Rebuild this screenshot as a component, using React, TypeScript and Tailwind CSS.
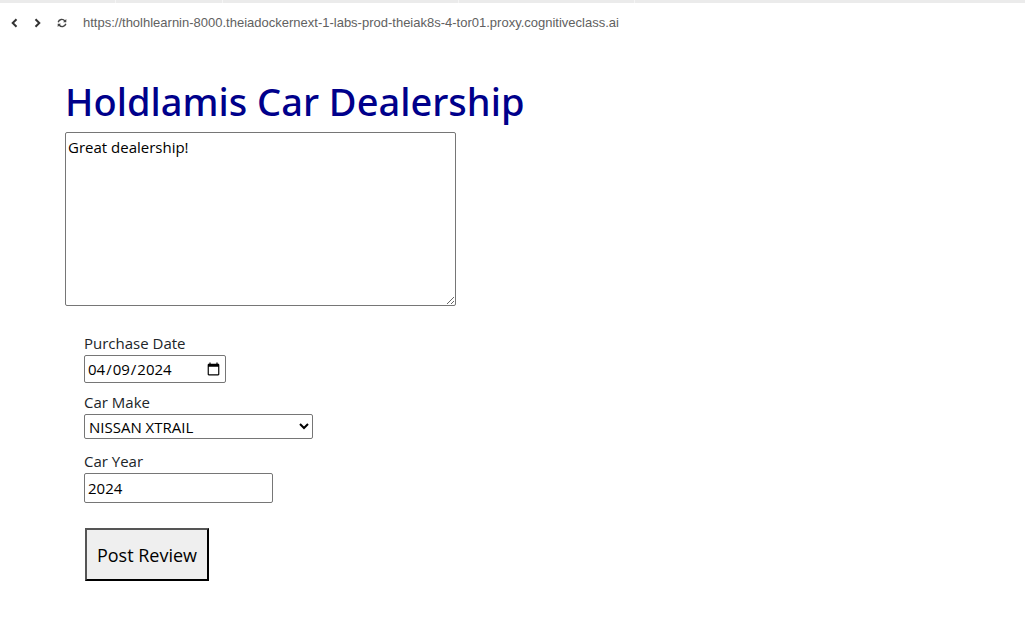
import { useState } from "react";

const segments = ["w-[116px]", "w-[107px]", "w-[236px]", "w-[176px]"];

const labelClass = "block text-[15px] leading-6 text-[#212529]";
const fieldClass =
  "block rounded-xs border border-[#767676] bg-white text-[15px] text-black";

function TabEdge() {
  return (
    <div className="flex h-[3px] bg-[#ebebeb]">
      {segments.map((width) => (
        <span key={width} className={`${width} border-r border-[#f5f5f5]`} />
      ))}
    </div>
  );
}

function AddressBar() {
  return (
    <nav className="flex h-10 items-center pl-2 font-['Liberation_Sans',sans-serif]">
      <button type="button" aria-label="Back" className="flex size-3 items-center justify-center">
        <svg width="12" height="12" viewBox="0 0 12 12" fill="none" stroke="#333" strokeWidth="2">
          <path d="M8.5 2.2 4.7 6l3.8 3.8" />
        </svg>
      </button>
      <button type="button" aria-label="Forward" className="ml-3 flex size-3 items-center justify-center">
        <svg width="12" height="12" viewBox="0 0 12 12" fill="none" stroke="#333" strokeWidth="2">
          <path d="M3.5 2.2 7.3 6 3.5 9.8" />
        </svg>
      </button>
      <button type="button" aria-label="Reload" className="ml-3 flex size-3 items-center justify-center">
        <svg width="12" height="12" viewBox="0 0 12 12" fill="none" stroke="#444" strokeWidth="1.4">
          <path d="M2.2 5.2A3.7 3.7 0 0 1 8.8 4M9.8 6.8A3.7 3.7 0 0 1 3.2 8" />
          <path d="M10.3 2v3.3H7zM1.7 10V6.7H5z" fill="#444" stroke="none" />
        </svg>
      </button>
      <input
        aria-label="Address"
        defaultValue="https://tholhlearnin-8000.theiadockernext-1-labs-prod-theiak8s-4-tor01.proxy.cognitiveclass.ai"
        className="ml-[15px] min-w-0 flex-1 bg-transparent text-[13px] leading-5 text-[#616161] outline-none"
      />
    </nav>
  );
}

export default function App() {
  const [review, setReview] = useState("Great dealership!");
  const [date, setDate] = useState("2024-04-09");
  const [year, setYear] = useState("2024");

  return (
    <div className="min-h-screen bg-white font-['Open_Sans','Noto_Sans',sans-serif]">
      <TabEdge />
      <AddressBar />
      <main className="px-[65px] pt-8">
        <h1 className="font-['Noto_Sans',sans-serif] text-[38px] leading-[53px] font-medium text-[#00008b]">
          Holdlamis Car Dealership
        </h1>
        <form onSubmit={(event) => event.preventDefault()}>
          <textarea
            id="review"
            aria-label="Review"
            cols={50}
            rows={7}
            value={review}
            onChange={(event) => setReview(event.target.value)}
            className="mt-1 block h-[174px] w-[391px] rounded-xs border border-[#767676] px-0.5 py-0.5 text-[15px] leading-6 text-black"
          />
          <div className="flex flex-col items-start gap-[7px] pt-[25px] pl-[19px]">
            <div>
              <label htmlFor="date" className={labelClass}>Purchase Date</label>
              <input
                id="date"
                type="date"
                value={date}
                onChange={(event) => setDate(event.target.value)}
                className={`${fieldClass} h-7 w-[142px] px-0.5`}
              />
            </div>
            <div>
              <label htmlFor="make" className={labelClass}>Car Make</label>
              <select id="make" className={`${fieldClass} h-[25px] w-[229px]`}>
                <option>NISSAN XTRAIL</option>
              </select>
            </div>
            <div className="pt-[3px]">
              <label htmlFor="year" className={labelClass}>Car Year</label>
              <input
                id="year"
                type="text"
                inputMode="numeric"
                value={year}
                onChange={(event) => setYear(event.target.value)}
                className={`${fieldClass} h-[30px] w-[189px] px-[3px]`}
              />
            </div>
            <button
              type="submit"
              className="mt-[18px] ml-px h-[53px] w-[124px] border-2 border-t-[#555] border-r-black border-b-black border-l-[#555] bg-[#efefef] text-lg text-black"
            >
              Post Review
            </button>
          </div>
        </form>
      </main>
    </div>
  );
}
